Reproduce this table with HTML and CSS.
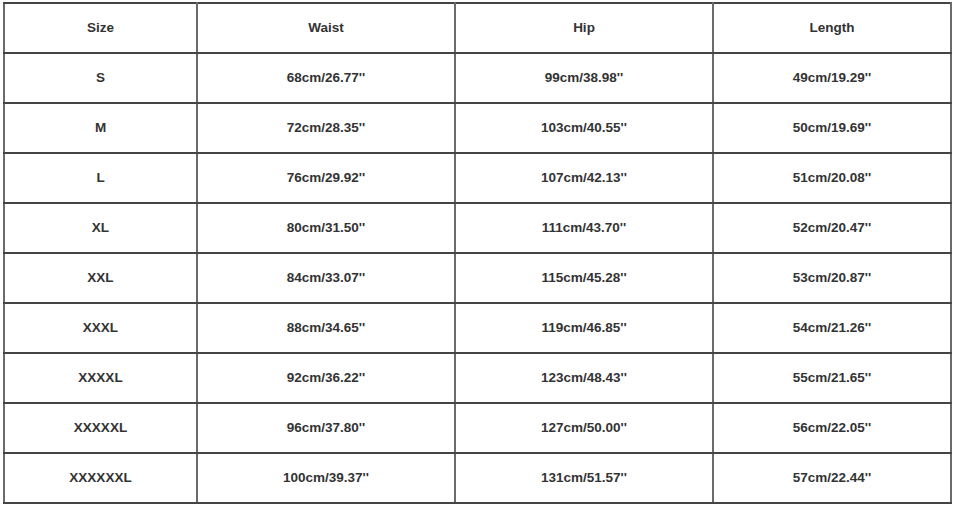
FILE: index.html
```html
<!DOCTYPE html>
<html>
<head>
<meta charset="utf-8">
<link rel="stylesheet" href="styles.css">
</head>
<body>
<table class="size-table">
  <colgroup>
    <col class="c1"><col class="c2"><col class="c3"><col class="c4">
  </colgroup>
  <tr><td>Size</td><td>Waist</td><td>Hip</td><td>Length</td></tr>
  <tr><td>S</td><td>68cm/26.77''</td><td>99cm/38.98''</td><td>49cm/19.29''</td></tr>
  <tr><td>M</td><td>72cm/28.35''</td><td>103cm/40.55''</td><td>50cm/19.69''</td></tr>
  <tr><td>L</td><td>76cm/29.92''</td><td>107cm/42.13''</td><td>51cm/20.08''</td></tr>
  <tr><td>XL</td><td>80cm/31.50''</td><td>111cm/43.70''</td><td>52cm/20.47''</td></tr>
  <tr><td>XXL</td><td>84cm/33.07''</td><td>115cm/45.28''</td><td>53cm/20.87''</td></tr>
  <tr><td>XXXL</td><td>88cm/34.65''</td><td>119cm/46.85''</td><td>54cm/21.26''</td></tr>
  <tr><td>XXXXL</td><td>92cm/36.22''</td><td>123cm/48.43''</td><td>55cm/21.65''</td></tr>
  <tr><td>XXXXXL</td><td>96cm/37.80''</td><td>127cm/50.00''</td><td>56cm/22.05''</td></tr>
  <tr><td>XXXXXXL</td><td>100cm/39.37''</td><td>131cm/51.57''</td><td>57cm/22.44''</td></tr>
</table>
</body>
</html>
```

FILE: styles.css
```css
html, body {
  margin: 0;
  padding: 0;
  background: #ffffff;
}
body {
  padding: 2px 0 0 3px;
  font-family: "Liberation Sans", Arial, sans-serif;
}
.size-table {
  border-collapse: collapse;
  table-layout: fixed;
  width: 947px;
}
.c1 { width: 193px; }
.c2 { width: 258px; }
.c3 { width: 258px; }
.c4 { width: 238px; }
.size-table td {
  border-top: 2px solid #444444;
  border-bottom: 2px solid #444444;
  border-left: 2px solid #6a6a6a;
  border-right: 2px solid #6a6a6a;
  height: 48px;
  padding: 0;
  line-height: 16px;
  text-align: center;
  vertical-align: middle;
  font-size: 13.5px;
  font-weight: bold;
  color: #333333;
}
```
